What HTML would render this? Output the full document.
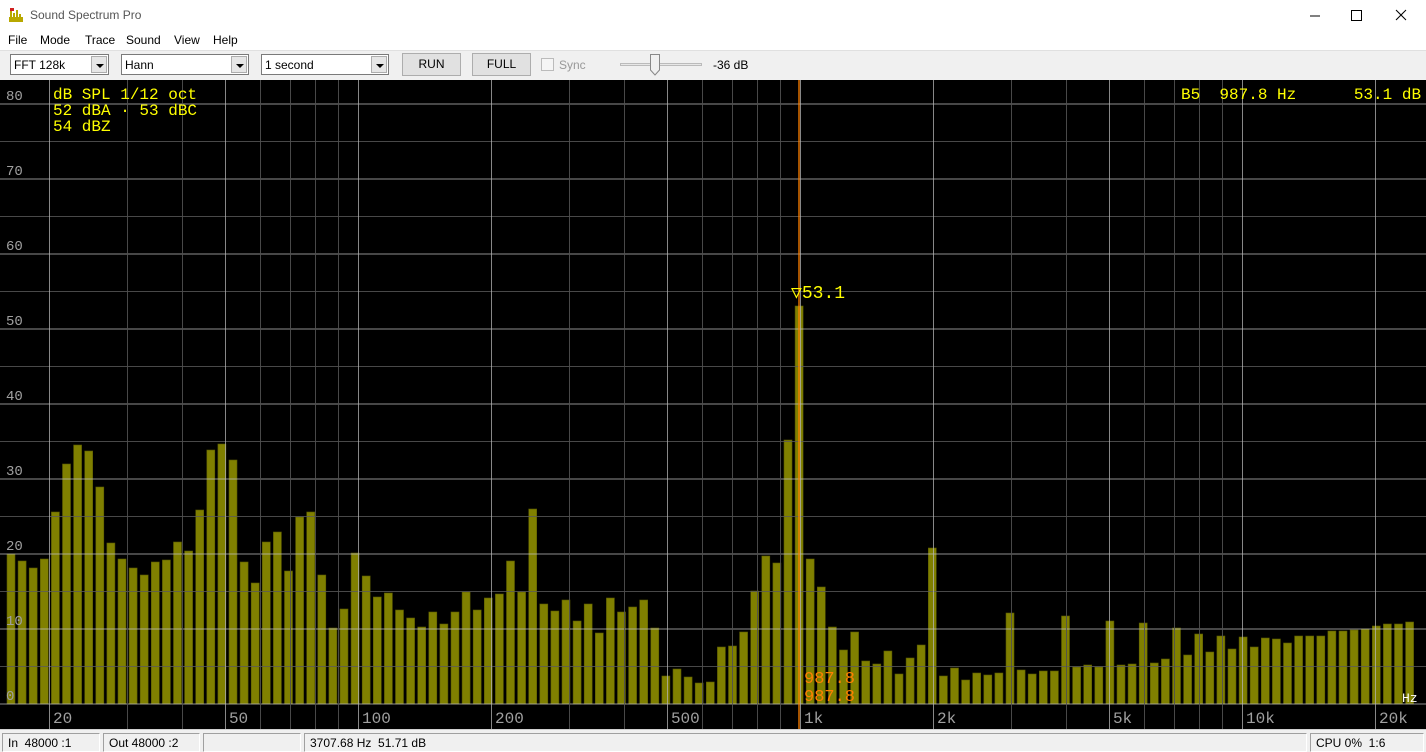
<!DOCTYPE html>
<html><head><meta charset="utf-8"><style>
*{margin:0;padding:0;box-sizing:border-box}
body{width:1426px;height:752px;overflow:hidden;background:#f0f0f0;font-family:"Liberation Sans",sans-serif;font-size:12px;color:#000;position:relative}
.abs{position:absolute}
#title{left:0;top:0;width:1426px;height:32px;background:#fff}
#menu{left:0;top:32px;width:1426px;height:19px;background:#fff;border-bottom:1px solid #e0e0e0}
#menu span{position:absolute;top:1px;font-size:12px}
#tb{left:0;top:51px;width:1426px;height:28px;background:#f0f0f0}
.combo{position:absolute;top:3px;height:21px;background:#fff;border:1px solid #7a7a7a;font-size:12px;padding:3px 3px}
.combo i{position:absolute;right:1px;top:1px;width:16px;height:17px;background:#e6e6e6;border:1px solid #adadad}
.combo i:after{content:"";position:absolute;left:4px;top:7px;border-left:4px solid transparent;border-right:4px solid transparent;border-top:4px solid #000}
.btn{position:absolute;top:2px;height:23px;background:#e1e1e1;border:1px solid #adadad;text-align:center;font-size:12px;line-height:21px}
#status{left:0;top:729px;width:1426px;height:23px;background:#f0f0f0;border-top:1px solid #d0d0d0}
.pan{position:absolute;top:3px;height:19px;border:1px solid #a0a0a0;border-right-color:#fff;border-bottom-color:#fff;font-size:12px;padding:2px 5px}
</style></head><body>
<div id="title" class="abs">
<svg class="abs" style="left:8px;top:7px" width="16" height="16"><rect x="1" y="10" width="14" height="5" fill="#b8a800"/><rect x="2" y="4" width="2" height="7" fill="#b8a800"/><rect x="5" y="6" width="2" height="5" fill="#b8a800"/><rect x="8" y="3" width="2" height="8" fill="#b8a800"/><rect x="11" y="7" width="2" height="4" fill="#b8a800"/><rect x="2" y="1" width="4" height="3" fill="#d02020"/></svg>
<span class="abs" style="left:30px;top:8px;font-size:12px;color:#555">Sound Spectrum Pro</span>
<svg class="abs" style="left:1300px;top:0" width="126" height="32"><line x1="10" y1="16" x2="20" y2="16" stroke="#000"/><rect x="51.5" y="10.5" width="10" height="10" fill="none" stroke="#000"/><line x1="96" y1="10" x2="106" y2="20" stroke="#000"/><line x1="106" y1="10" x2="96" y2="20" stroke="#000"/></svg>
</div>
<div id="menu" class="abs"><span style="left:8px">File</span><span style="left:40px">Mode</span><span style="left:85px">Trace</span><span style="left:126px">Sound</span><span style="left:174px">View</span><span style="left:213px">Help</span></div>
<div id="tb" class="abs">
<div class="combo" style="left:10px;width:99px">FFT 128k<i></i></div>
<div class="combo" style="left:121px;width:128px">Hann<i></i></div>
<div class="combo" style="left:261px;width:128px">1 second<i></i></div>
<div class="btn" style="left:402px;width:59px">RUN</div>
<div class="btn" style="left:472px;width:59px">FULL</div>
<div class="abs" style="left:541px;top:7px;width:13px;height:13px;border:1px solid #bbb;background:#f5f5f5"></div>
<span class="abs" style="left:559px;top:7px;color:#999">Sync</span>
<div class="abs" style="left:620px;top:12px;width:82px;height:3px;border:1px solid #bbb;background:#e7e7e7"></div>
<svg class="abs" style="left:650px;top:3px" width="10" height="22"><path d="M0.5 0.5H9.5V16L5 21L0.5 16Z" fill="#f0f0f0" stroke="#888"/></svg>
<span class="abs" style="left:713px;top:7px">-36 dB</span>
</div>
<svg class="abs" style="left:0;top:80px" width="1426" height="649" id="plot">
<rect width="1426" height="649" fill="#000"/>
<g id="bars"></g><g id="grid"></g>
<line x1="799" y1="0" x2="799" y2="649" stroke="#ff8000" stroke-width="1.3"/>
<g font-family="Liberation Mono, monospace" font-size="14">
<g fill="#a0a0a0" id="ylab"></g>
<g fill="#a0a0a0" id="xlab" font-size="16"></g>
<text x="53" y="19" fill="#ffff00" font-size="16">dB SPL 1/12 oct</text>
<text x="53" y="35" fill="#ffff00" font-size="16">52 dBA · 53 dBC</text>
<text x="53" y="51" fill="#ffff00" font-size="16">54 dBZ</text>
<text x="1181" y="19" fill="#ffff00" font-size="16" xml:space="preserve">B5  987.8 Hz      53.1 dB</text>
<text x="791" y="218" fill="#ffff00" font-size="18">▽53.1</text>
<text x="804" y="603" fill="#ff8000" font-size="17">987.8</text>
<text x="804" y="621" fill="#ff8000" font-size="17">987.8</text>
<text x="1402" y="622" fill="#fff" font-size="13">Hz</text>
</g>
</svg>
<div id="status" class="abs">
<div class="pan" style="left:2px;width:98px">In &nbsp;48000 :1</div>
<div class="pan" style="left:103px;width:97px">Out 48000 :2</div>
<div class="pan" style="left:203px;width:98px"></div>
<div class="pan" style="left:304px;width:1003px">3707.68 Hz &nbsp;51.71 dB</div>
<div class="pan" style="left:1310px;width:114px">CPU 0% &nbsp;1:6</div>
</div>
<script>
var T=[554,561,568,559,512,464,445,451,487,543,559,568,575,562,560,542,551,510,450,444,460,562,583,542,532,571,517,512,575,628,609,553,576,597,593,610,618,627,612,624,612,592,610,598,594,561,592,509,604,611,600,621,604,633,598,612,607,600,628,676,669,677,683,682,647,646,632,591,556,563,440,306,559,587,627,650,632,661,664,651,674,658,645,548,676,668,680,673,675,673,613,670,674,671,671,616,667,665,667,621,665,664,623,663,659,628,655,634,652,636,649,637,647,638,639,643,636,636,636,631,631,630,629,626,624,624,622];
var ns="http://www.w3.org/2000/svg",b=document.getElementById("bars"),g=document.getElementById("grid");
function el(p,t,a){var e=document.createElementNS(ns,t);for(var k in a)e.setAttribute(k,a[k]);p.appendChild(e);return e}
T.forEach(function(t,i){var x=7+i*11.1;el(b,"rect",{x:x.toFixed(1),y:t-80,width:8,height:704-t,fill:"#808000",stroke:"#5a5a00","stroke-width":0.6})});
for(var d=0;d<=80;d+=5){var y=624-7.5*d;el(g,"line",{x1:0,x2:1426,y1:y,y2:y,stroke:d%10?"rgba(90,90,90,0.8)":"rgba(190,190,190,0.75)","stroke-width":1})}
var maj={20:1,50:1,100:1,200:1,500:1,1000:1,2000:1,5000:1,10000:1,20000:1};
[1,10,100,1000,10000].forEach(function(dec){for(var m=1;m<10;m++){var f=dec*m;if(f<20||f>20000)continue;var x=Math.round(358+442*Math.log10(f/100))+0.5;el(g,"line",{x1:x,x2:x,y1:0,y2:649,stroke:maj[f]?"rgba(180,180,180,0.75)":"rgba(80,80,80,0.9)"})}});
var yl=document.getElementById("ylab");for(var d=0;d<=80;d+=10){var t=el(yl,"text",{x:6,y:624-7.5*d-4});t.textContent=d}
var xl=document.getElementById("xlab");[[20,"20"],[50,"50"],[100,"100"],[200,"200"],[500,"500"],[1000,"1k"],[2000,"2k"],[5000,"5k"],[10000,"10k"],[20000,"20k"]].forEach(function(a){var x=358+442*Math.log10(a[0]/100)+4;var t=el(xl,"text",{x:x,y:643});t.textContent=a[1]});
</script>
</body></html>
